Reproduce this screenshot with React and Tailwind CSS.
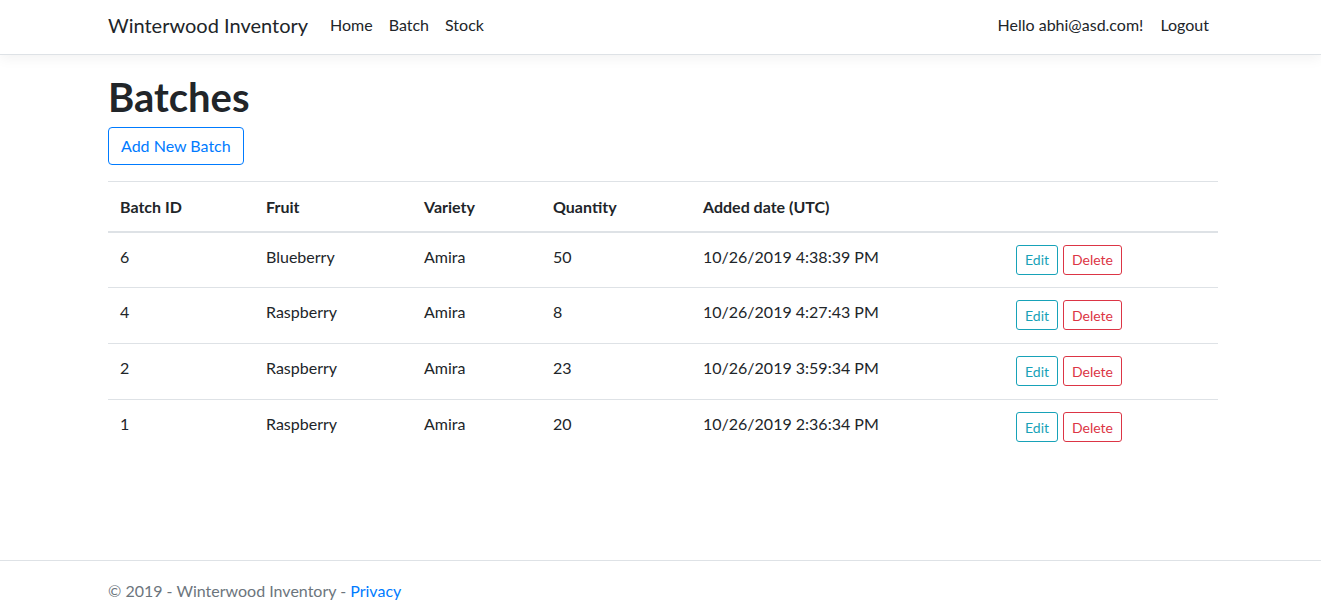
const batches = [
  { id: 6, fruit: "Blueberry", variety: "Amira", qty: 50, added: "10/26/2019 4:38:39 PM" },
  { id: 4, fruit: "Raspberry", variety: "Amira", qty: 8, added: "10/26/2019 4:27:43 PM" },
  { id: 2, fruit: "Raspberry", variety: "Amira", qty: 23, added: "10/26/2019 3:59:34 PM" },
  { id: 1, fruit: "Raspberry", variety: "Amira", qty: 20, added: "10/26/2019 2:36:34 PM" },
]

function Navbar() {
  return (
    <header className="bg-white border-b border-[#dee2e6] shadow-[0_4px_12px_rgba(0,0,0,0.05)] h-[55px]">
      <div className="w-[1110px] ml-[108px] h-full flex items-center pb-[4px]">
        <span className="text-[20px] text-[#212529] mr-[22px] leading-none">Winterwood Inventory</span>
        <nav className="flex items-center gap-[16px] text-[#212529]">
          <a>Home</a>
          <a>Batch</a>
          <a>Stock</a>
        </nav>
        <div className="ml-auto flex items-center gap-[17px] text-[#212529] pr-[9px]">
          <span>Hello abhi@asd.com!</span>
          <a>Logout</a>
        </div>
      </div>
    </header>
  )
}

function BatchTable() {
  return (
    <table className="w-full border-collapse text-[#212529] mt-[16px]">
      <thead>
        <tr className="border-t border-[#dee2e6]">
          <th className="w-[146px] text-left font-bold px-[12px] h-[50px] pt-[2px] border-b-2 border-[#dee2e6]">Batch ID</th>
          <th className="w-[158px] text-left font-bold px-[12px] pt-[2px] border-b-2 border-[#dee2e6]">Fruit</th>
          <th className="w-[129px] text-left font-bold px-[12px] pt-[2px] border-b-2 border-[#dee2e6]">Variety</th>
          <th className="w-[150px] text-left font-bold px-[12px] pt-[2px] border-b-2 border-[#dee2e6]">Quantity</th>
          <th className="w-[313px] text-left font-bold px-[12px] pt-[2px] border-b-2 border-[#dee2e6]">Added date (UTC)</th>
          <th className="border-b-2 border-[#dee2e6]"></th>
        </tr>
      </thead>
      <tbody>
        {batches.map((b) => (
          <tr key={b.id} className="border-t border-[#dee2e6] h-[56px]">
            <td className="px-[12px] align-top pt-[12px]">{b.id}</td>
            <td className="px-[12px] align-top pt-[12px]">{b.fruit}</td>
            <td className="px-[12px] align-top pt-[12px]">{b.variety}</td>
            <td className="px-[12px] align-top pt-[12px]">{b.qty}</td>
            <td className="px-[12px] align-top pt-[12px]">{b.added}</td>
            <td className="px-[12px] align-top pt-[12px]">
              <div className="flex gap-[5px]">
                <button className="h-[30px] px-[8px] text-[14px] text-[#17a2b8] border border-[#17a2b8] rounded-[3px] bg-white">Edit</button>
                <button className="h-[30px] px-[8px] text-[14px] text-[#dc3545] border border-[#dc3545] rounded-[3px] bg-white">Delete</button>
              </div>
            </td>
          </tr>
        ))}
      </tbody>
    </table>
  )
}

export default function App() {
  return (
    <div className="h-screen flex flex-col bg-white font-['Lato',sans-serif] text-[16px]">
      <Navbar />
      <main className="flex-1 w-[1110px] ml-[108px] pt-[18px]">
        <h1 className="text-[40px] font-bold leading-[48px] text-[#212529] mb-[6px]">Batches</h1>
        <button className="h-[38px] px-[12px] text-[#007bff] border border-[#007bff] rounded-[4px] bg-white">
          Add New Batch
        </button>
        <BatchTable />
      </main>
      <footer className="border-t border-[#dee2e6] h-[56px] flex items-center pt-[4px]">
        <div className="w-[1110px] ml-[108px] text-[#6c757d]">
          © 2019 - Winterwood Inventory - <a className="text-[#007bff]">Privacy</a>
        </div>
      </footer>
    </div>
  )
}
